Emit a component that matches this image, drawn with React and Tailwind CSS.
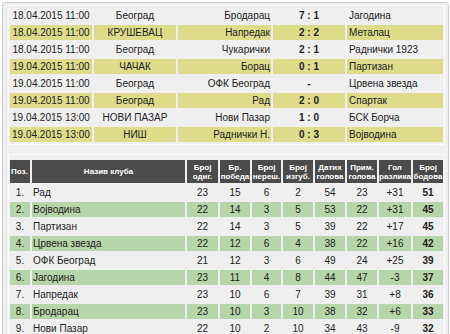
import React from "react";

const results = [
  ["18.04.2015 11:00", "Београд", "Бродарац", "7 : 1", "Јагодина"],
  ["18.04.2015 11:00", "КРУШЕВАЦ", "Напредак", "2 : 2", "Металац"],
  ["18.04.2015 11:00", "Београд", "Чукарички", "2 : 1", "Раднички 1923"],
  ["19.04.2015 11:00", "ЧАЧАК", "Борац", "0 : 1", "Партизан"],
  ["19.04.2015 11:00", "Београд", "ОФК Београд", "-", "Црвена звезда"],
  ["19.04.2015 11:00", "Београд", "Рад", "2 : 0", "Спартак"],
  ["19.04.2015 13:00", "НОВИ ПАЗАР", "Нови Пазар", "1 : 0", "БСК Борча"],
  ["19.04.2015 13:00", "НИШ", "Раднички Н.", "0 : 3", "Војводина"],
];

const table = [
  ["1.", "Рад", 23, 15, 6, 2, 54, 23, "+31", 51],
  ["2.", "Војводина", 22, 14, 3, 5, 53, 22, "+31", 45],
  ["3.", "Партизан", 22, 14, 3, 5, 39, 22, "+17", 45],
  ["4.", "Црвена звезда", 22, 12, 6, 4, 38, 22, "+16", 42],
  ["5.", "ОФК Београд", 21, 12, 3, 6, 49, 24, "+25", 39],
  ["6.", "Јагодина", 23, 11, 4, 8, 44, 47, "-3", 37],
  ["7.", "Напредак", 23, 10, 6, 7, 39, 31, "+8", 36],
  ["8.", "Бродарац", 23, 10, 3, 10, 38, 32, "+6", 33],
  ["9.", "Нови Пазар", 22, 10, 2, 10, 34, 43, "-9", 32],
];

const heads = [
  ["Број", "одиг."],
  ["Бр.", "победа"],
  ["Број", "нереш."],
  ["Број", "изгуб."],
  ["Датих", "голова"],
  ["Прим.", "голова"],
  ["Гол", "разлика"],
  ["Број", "бодова"],
];

const resCols = "grid grid-cols-[82px_82px_93px_72px_96px] gap-x-[2px]";
const tabCols =
  "grid grid-cols-[20px_153px_31px_30px_29px_30px_30px_30px_32px_30px] gap-x-[2px]";

export default function App() {
  return (
    <div
      className="w-[450px] h-[334px] overflow-hidden bg-white pl-[2px] pt-[2px] text-[10px] text-[#222]"
      style={{ fontFamily: '"Liberation Sans", Arial, sans-serif' }}
    >
      <div className="w-[447px] h-[340px] border border-[#cdcdcd] rounded-[3px] bg-[#efefef] pl-[5px] pt-[2px]">
        <div className="w-[437px] border border-[#fafafa] pl-px pt-[2px] pb-[2px] flex flex-col gap-y-[2px]">
          {results.map((r, i) => {
            const y = i % 2 === 1;
            const bg = y ? "bg-[#dedb8b]" : "";
            return (
              <div key={i} className={resCols + " h-[15px] leading-[15px]"}>
                <div className={bg + " text-center"}>{r[0]}</div>
                <div className={bg + " text-center"}>{r[1]}</div>
                <div className={bg + " text-right pr-px"}>{r[2]}</div>
                <div className={bg + " text-center font-bold"}>{r[3]}</div>
                <div className={bg + " pl-[2px]"}>{r[4]}</div>
              </div>
            );
          })}
        </div>
        <div className="mt-[9px] w-[437px] border border-[#fafafa] pl-px pt-[5px] flex flex-col gap-y-[2px]">
          <div className={tabCols + " h-[23px] text-white font-bold text-[8px] leading-[9px]"}>
            <div className="bg-[#4b4b4b] flex items-center pl-px">Поз.</div>
            <div className="bg-[#4b4b4b] flex items-center justify-center">Назив клуба</div>
            {heads.map((h, i) => (
              <div
                key={i}
                className="bg-[#4b4b4b] flex flex-col items-center justify-center text-center whitespace-nowrap"
              >
                <span>{h[0]}</span>
                <span>{h[1]}</span>
              </div>
            ))}
          </div>
          {table.map((r, i) => {
            const g = i % 2 === 1;
            const bg = g ? "bg-[#b7d5aa]" : "";
            return (
              <div key={i} className={tabCols + " h-[15px] leading-[15px]"}>
                <div className={bg + " text-center"}>{r[0]}</div>
                <div className={bg + " pl-px"}>{r[1]}</div>
                {r.slice(2).map((v, j) => (
                  <div
                    key={j}
                    className={bg + " text-center" + (j === 7 ? " font-bold" : "")}
                  >
                    {v}
                  </div>
                ))}
              </div>
            );
          })}
        </div>
      </div>
    </div>
  );
}
